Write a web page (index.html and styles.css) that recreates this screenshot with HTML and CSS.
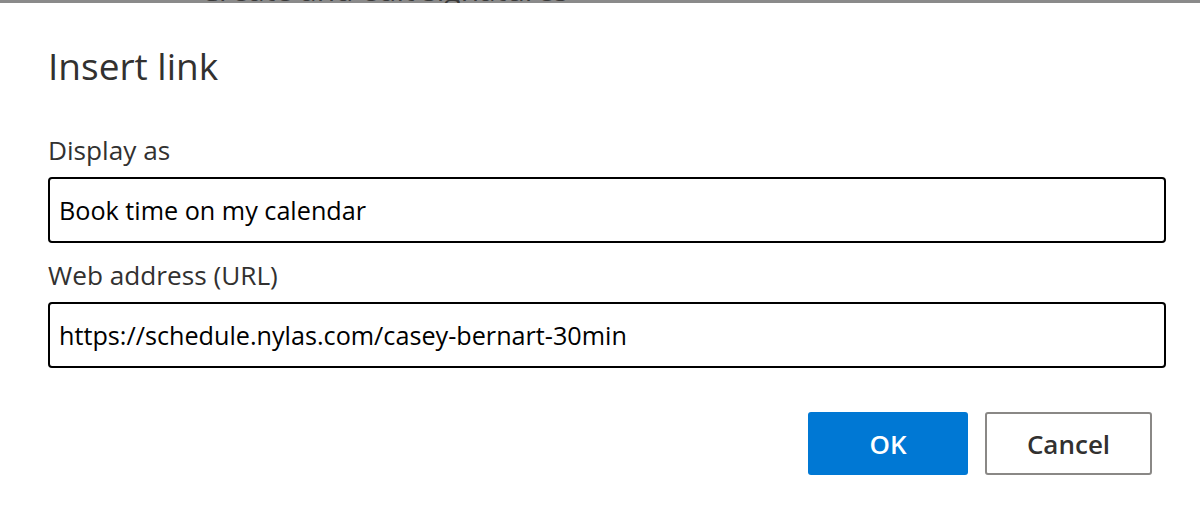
FILE: index.html
```html
<!DOCTYPE html>
<html lang="en">
<head>
    <meta charset="UTF-8">
    <meta name="viewport" content="width=device-width, initial-scale=1.0">
    <title>Insert link</title>
    <link rel="stylesheet" href="styles.css">
</head>
<body>
    <div class="backdrop">
        <span class="backdrop-text">Create and edit signatures</span>
    </div>
    <div class="dialog">
        <h1 class="dialog-title">Insert link</h1>
        <label class="field-label" for="display">Display as</label>
        <input class="field-input" id="display" type="text" value="Book time on my calendar">
        <label class="field-label" for="url">Web address (URL)</label>
        <input class="field-input" id="url" type="text" value="https://schedule.nylas.com/casey-bernart-30min">
        <div class="actions">
            <button class="btn btn-primary">OK</button>
            <button class="btn btn-default">Cancel</button>
        </div>
    </div>
</body>
</html>
```

FILE: styles.css
```css
html, body {
    margin: 0;
    height: 100%;
    background: #ffffff;
    font-family: "Open Sans", "Noto Sans", Arial, sans-serif;
    color: #323130;
    overflow: hidden;
}

.backdrop {
    height: 3px;
    background: #8a8a8a;
    overflow: hidden;
}

/* the page behind the dialog only peeks out at the very top */
.backdrop-text {
    display: block;
    margin-top: -25px;
    padding-left: 200px;
    font-size: 30px;
    line-height: 30px;
    color: #3a3a3a;
}

.dialog {
    display: flex;
    flex-direction: column;
    height: 523px;
    padding: 0 34px 0 48px;
    background: #ffffff;
    border-radius: 3px 3px 0 0;
    box-sizing: border-box;
}

.dialog-title {
    margin: 38px 0 0;
    font-size: 37px;
    line-height: 50px;
    font-weight: 400;
    color: #323130;
}

.field-label {
    margin-top: 42px;
    margin-bottom: 10px;
    font-size: 26.2px;
    line-height: 34px;
    color: #323130;
}

.field-label + .field-input + .field-label {
    margin-top: 15px;
}

.field-input {
    height: 66px;
    padding: 0 9px;
    border: 2px solid #000000;
    border-radius: 4px;
    font-family: inherit;
    font-size: 25.2px;
    color: #000000;
    box-sizing: border-box;
    outline: none;
}

.actions {
    display: flex;
    justify-content: flex-end;
    gap: 17px;
    margin-top: 44px;
    padding-right: 14px;
}

.btn {
    height: 63px;
    border-radius: 3px;
    font-family: inherit;
    font-size: 26px;
    font-weight: 600;
    cursor: pointer;
    box-sizing: border-box;
}

.btn-primary {
    width: 160px;
    background: #0078d4;
    border: none;
    color: #ffffff;
}

.btn-default {
    width: 167px;
    background: #ffffff;
    border: 2px solid #8a8886;
    color: #323130;
}
```
